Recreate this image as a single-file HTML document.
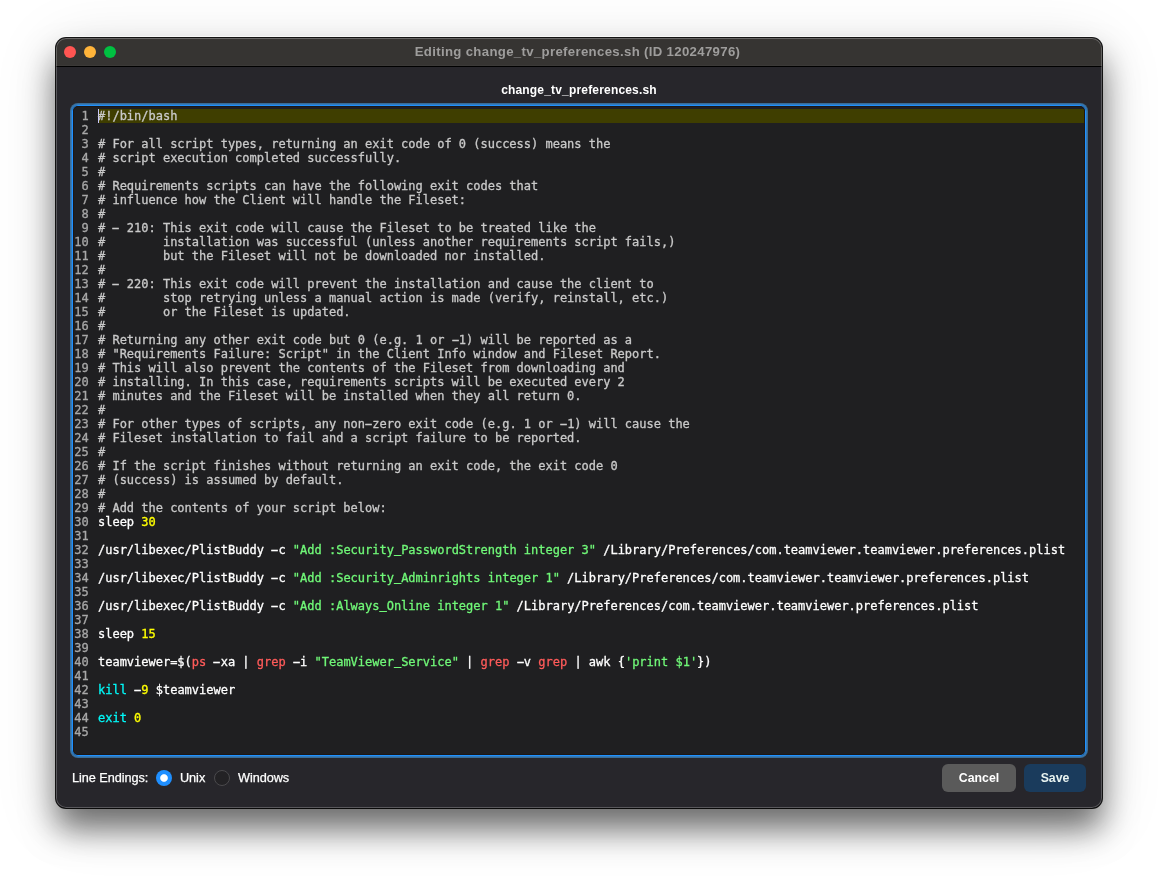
<!DOCTYPE html>
<html lang="en">
<head>
<meta charset="utf-8">
<title>Editing change_tv_preferences.sh (ID 120247976)</title>
<style>
html,body{margin:0;padding:0;}
body{width:1158px;height:882px;background:#fff;position:relative;overflow:hidden;font-family:"Liberation Sans",sans-serif;}
#win{position:absolute;left:56px;top:38px;width:1046px;height:770px;border-radius:10px;background:#27262b;
  box-shadow:0 0 0 1px rgba(0,0,0,.92),0 -1px 0 1px rgba(255,255,255,.65),0 21px 32px 0 rgba(0,0,0,.54),0 10px 64px 0 rgba(0,0,0,.13);}
#inner{position:absolute;inset:0;border-radius:10px;overflow:hidden;will-change:transform;}
#inner:after{content:'';position:absolute;inset:0;border-radius:10px;box-shadow:inset 0 0 0 1px rgba(255,255,255,.23),inset 0 1px 0 0 rgba(255,255,255,.04);pointer-events:none;}
#tb{position:absolute;left:0;top:0;right:0;height:28px;background:#363432;border-bottom:1px solid #000;box-shadow:inset 0 -1px 0 #3b3937;}
.tl{position:absolute;top:8px;width:12px;height:12px;border-radius:50%;}
#t1{left:8px;background:#ff5552;}
#t2{left:28px;background:#ffb43a;}
#t3{left:48px;background:#00c041;}
#title{position:absolute;left:-3px;right:0;top:6px;text-align:center;font-weight:bold;font-size:13.2px;letter-spacing:.33px;line-height:16px;color:#9e9d9c;}
#fname{position:absolute;left:0;right:0;top:45px;text-align:center;font-weight:bold;font-size:12px;letter-spacing:.18px;line-height:14px;color:#fff;}
#ed{position:absolute;left:16px;top:67px;width:1014px;height:651px;box-sizing:border-box;border:1px solid #1e90ff;border-radius:6px;background:#1f1f21;overflow:hidden;}
#ring{position:absolute;left:16px;top:67px;width:1014px;height:651px;border-radius:6px;box-shadow:0 0 0 1px #347ab8,0 0 0 2px #3a6c96;pointer-events:none;}
#ed:after{content:'';position:absolute;inset:0;border-radius:5px;box-shadow:inset 0 0 0 1px #1c1715;pointer-events:none;}
#code{position:absolute;left:0;top:3px;will-change:transform;margin:0;font-family:"DejaVu Sans Mono","Liberation Mono",monospace;font-size:12px;line-height:14px;color:#fff;white-space:pre;-webkit-text-stroke:.3px;letter-spacing:-.0075px;}
.ln{display:block;height:14px;}
.n{display:inline-block;width:15.7px;text-align:right;color:#a8a8a8;margin-right:9.3px;}
.h{display:inline-block;transform:translateY(-.4px) scaleX(1.95);}
.u{display:inline-block;transform:translateY(-1px);}
.c{color:#c9c9c9;}
.y{color:#ffff00;}
.g{color:#70f878;}
.r{color:#ff5b5a;}
.k{color:#00f8f8;}
#hl{position:absolute;left:25px;top:3px;right:1px;height:14px;background:#3f3e00;border-left:1px solid #c9c8ff;}
.lab{position:absolute;top:732px;font-size:12.7px;line-height:16px;color:#fff;letter-spacing:-.05px;white-space:pre;-webkit-text-stroke:.25px;}
.rad{position:absolute;top:732px;width:16px;height:16px;border-radius:50%;box-sizing:border-box;}
#r1{left:100px;background:radial-gradient(circle at 50% 50%,#fff 0,#fff 3.3px,#1f8fff 4.3px);}
#r2{left:158px;background:#232225;border:1px solid #4b4a4d;}
.btn{position:absolute;top:726px;height:28px;border-radius:6px;font-weight:bold;font-size:12.3px;line-height:28px;text-align:center;color:#fff;}
#cancel{left:886px;width:74px;background:#5a5a5a;}
#save{left:968px;width:62px;background:#1a3b5c;color:#e8f3f0;}
</style>
</head>
<body>
<div id="win"><div id="inner">
<div id="tb"><div class="tl" id="t1"></div><div class="tl" id="t2"></div><div class="tl" id="t3"></div>
<div id="title">Editing change_tv_preferences.sh (ID 120247976)</div></div>
<div id="fname">change_tv_preferences.sh</div>
<div id="ring"></div><div id="ed"><div id="hl"></div><pre id="code"><span class="ln"><span class="n">1</span><span class="c">#!/bin/bash</span></span><span class="ln"><span class="n">2</span></span><span class="ln"><span class="n">3</span><span class="c"># For all script types, returning an exit code of 0 (success) means the</span></span><span class="ln"><span class="n">4</span><span class="c"># script execution completed successfully.</span></span><span class="ln"><span class="n">5</span><span class="c">#</span></span><span class="ln"><span class="n">6</span><span class="c"># Requirements scripts can have the following exit codes that</span></span><span class="ln"><span class="n">7</span><span class="c"># influence how the Client will handle the Fileset:</span></span><span class="ln"><span class="n">8</span><span class="c">#</span></span><span class="ln"><span class="n">9</span><span class="c"># <span class="h">-</span> 210: This exit code will cause the Fileset to be treated like the</span></span><span class="ln"><span class="n">10</span><span class="c">#        installation was successful (unless another requirements script fails,)</span></span><span class="ln"><span class="n">11</span><span class="c">#        but the Fileset will not be downloaded nor installed.</span></span><span class="ln"><span class="n">12</span><span class="c">#</span></span><span class="ln"><span class="n">13</span><span class="c"># <span class="h">-</span> 220: This exit code will prevent the installation and cause the client to</span></span><span class="ln"><span class="n">14</span><span class="c">#        stop retrying unless a manual action is made (verify, reinstall, etc.)</span></span><span class="ln"><span class="n">15</span><span class="c">#        or the Fileset is updated.</span></span><span class="ln"><span class="n">16</span><span class="c">#</span></span><span class="ln"><span class="n">17</span><span class="c"># Returning any other exit code but 0 (e.g. 1 or <span class="h">-</span>1) will be reported as a</span></span><span class="ln"><span class="n">18</span><span class="c"># "Requirements Failure: Script" in the Client Info window and Fileset Report.</span></span><span class="ln"><span class="n">19</span><span class="c"># This will also prevent the contents of the Fileset from downloading and</span></span><span class="ln"><span class="n">20</span><span class="c"># installing. In this case, requirements scripts will be executed every 2</span></span><span class="ln"><span class="n">21</span><span class="c"># minutes and the Fileset will be installed when they all return 0.</span></span><span class="ln"><span class="n">22</span><span class="c">#</span></span><span class="ln"><span class="n">23</span><span class="c"># For other types of scripts, any non<span class="h">-</span>zero exit code (e.g. 1 or <span class="h">-</span>1) will cause the</span></span><span class="ln"><span class="n">24</span><span class="c"># Fileset installation to fail and a script failure to be reported.</span></span><span class="ln"><span class="n">25</span><span class="c">#</span></span><span class="ln"><span class="n">26</span><span class="c"># If the script finishes without returning an exit code, the exit code 0</span></span><span class="ln"><span class="n">27</span><span class="c"># (success) is assumed by default.</span></span><span class="ln"><span class="n">28</span><span class="c">#</span></span><span class="ln"><span class="n">29</span><span class="c"># Add the contents of your script below:</span></span><span class="ln"><span class="n">30</span>sleep <span class="y">30</span></span><span class="ln"><span class="n">31</span></span><span class="ln"><span class="n">32</span>/usr/libexec/PlistBuddy <span class="h">-</span>c <span class="g">"Add :Security<span class="u">_</span>PasswordStrength integer 3"</span> /Library/Preferences/com.teamviewer.teamviewer.preferences.plist</span><span class="ln"><span class="n">33</span></span><span class="ln"><span class="n">34</span>/usr/libexec/PlistBuddy <span class="h">-</span>c <span class="g">"Add :Security<span class="u">_</span>Adminrights integer 1"</span> /Library/Preferences/com.teamviewer.teamviewer.preferences.plist</span><span class="ln"><span class="n">35</span></span><span class="ln"><span class="n">36</span>/usr/libexec/PlistBuddy <span class="h">-</span>c <span class="g">"Add :Always<span class="u">_</span>Online integer 1"</span> /Library/Preferences/com.teamviewer.teamviewer.preferences.plist</span><span class="ln"><span class="n">37</span></span><span class="ln"><span class="n">38</span>sleep <span class="y">15</span></span><span class="ln"><span class="n">39</span></span><span class="ln"><span class="n">40</span>teamviewer=$(<span class="r">ps</span> <span class="h">-</span>xa | <span class="r">grep</span> <span class="h">-</span>i <span class="g">"TeamViewer<span class="u">_</span>Service"</span> | <span class="r">grep</span> <span class="h">-</span>v <span class="r">grep</span> | awk {<span class="g">'print $1'</span>})</span><span class="ln"><span class="n">41</span></span><span class="ln"><span class="n">42</span><span class="k">kill</span> <span class="h">-</span><span class="y">9</span> $teamviewer</span><span class="ln"><span class="n">43</span></span><span class="ln"><span class="n">44</span><span class="k">exit</span> <span class="y">0</span></span><span class="ln"><span class="n">45</span></span></pre></div>
<div class="lab" style="left:16px">Line Endings:</div><div class="rad" id="r1"></div><div class="lab" style="left:124px">Unix</div><div class="rad" id="r2"></div><div class="lab" style="left:182px">Windows</div>
<div class="btn" id="cancel">Cancel</div>
<div class="btn" id="save">Save</div>
</div></div>
</body>
</html>
